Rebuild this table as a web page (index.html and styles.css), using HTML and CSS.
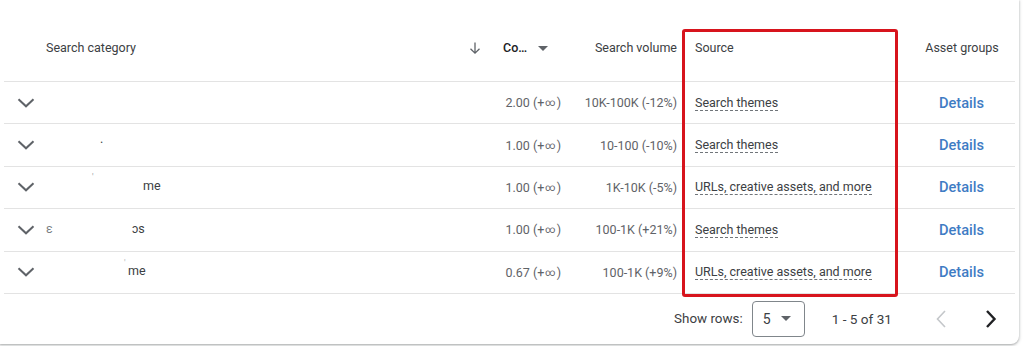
FILE: index.html
```html
<!DOCTYPE html>
<html>
<head>
<meta charset="utf-8">
<link rel="stylesheet" href="styles.css">
</head>
<body>
<div class="card">
  <div class="table">
    <div class="row head">
      <div class="cell"></div>
      <div class="cell cat">Search category</div>
      <div class="cell arrow">
        <svg width="14" height="14" viewBox="0 0 14 14"><path d="M7 1.5v10.5M2.5 7.8L7 12.2l4.5-4.4" fill="none" stroke="#5f6368" stroke-width="1.3"/></svg>
      </div>
      <div class="cell co"><span class="co-label">Co…</span><svg class="drop" width="10" height="5" viewBox="0 0 10 5"><path d="M0 0h10L5 5z" fill="#5f6368"/></svg></div>
      <div class="cell vol">Search volume</div>
      <div class="cell src">Source</div>
      <div class="cell ag">Asset groups</div>
    </div>

    <div class="row r1">
      <div class="cell exp"><svg width="18" height="10" viewBox="0 0 18 10"><path d="M1.5 1.2L9 8.3l7.5-7.1" fill="none" stroke="#5f6368" stroke-width="2"/></svg></div>
      <div class="cell cat"></div>
      <div class="cell"></div>
      <div class="cell num">2.00 (+<span class="inf">∞</span>)</div>
      <div class="cell vol num">10K-100K (-12%)</div>
      <div class="cell src"><span class="dotted">Search themes</span></div>
      <div class="cell ag"><span class="link">Details</span></div>
    </div>

    <div class="row r2">
      <div class="cell exp"><svg width="18" height="10" viewBox="0 0 18 10"><path d="M1.5 1.2L9 8.3l7.5-7.1" fill="none" stroke="#5f6368" stroke-width="2"/></svg></div>
      <div class="cell cat"><span class="frag f2">.</span></div>
      <div class="cell"></div>
      <div class="cell num">1.00 (+<span class="inf">∞</span>)</div>
      <div class="cell vol num">10-100 (-10%)</div>
      <div class="cell src"><span class="dotted">Search themes</span></div>
      <div class="cell ag"><span class="link">Details</span></div>
    </div>

    <div class="row r3">
      <div class="cell exp"><svg width="18" height="10" viewBox="0 0 18 10"><path d="M1.5 1.2L9 8.3l7.5-7.1" fill="none" stroke="#5f6368" stroke-width="2"/></svg></div>
      <div class="cell cat"><span class="frag f3a">'</span><span class="frag f3b">me</span></div>
      <div class="cell"></div>
      <div class="cell num">1.00 (+<span class="inf">∞</span>)</div>
      <div class="cell vol num">1K-10K (-5%)</div>
      <div class="cell src"><span class="dotted">URLs, creative assets, and more</span></div>
      <div class="cell ag"><span class="link">Details</span></div>
    </div>

    <div class="row r4">
      <div class="cell exp"><svg width="18" height="10" viewBox="0 0 18 10"><path d="M1.5 1.2L9 8.3l7.5-7.1" fill="none" stroke="#5f6368" stroke-width="2"/></svg></div>
      <div class="cell cat"><span class="frag f4a">ε</span><span class="frag f4b">ɔs</span></div>
      <div class="cell"></div>
      <div class="cell num">1.00 (+<span class="inf">∞</span>)</div>
      <div class="cell vol num">100-1K (+21%)</div>
      <div class="cell src"><span class="dotted">Search themes</span></div>
      <div class="cell ag"><span class="link">Details</span></div>
    </div>

    <div class="row r5">
      <div class="cell exp"><svg width="18" height="10" viewBox="0 0 18 10"><path d="M1.5 1.2L9 8.3l7.5-7.1" fill="none" stroke="#5f6368" stroke-width="2"/></svg></div>
      <div class="cell cat"><span class="frag f5a">'</span><span class="frag f5b">me</span></div>
      <div class="cell"></div>
      <div class="cell num">0.67 (+<span class="inf">∞</span>)</div>
      <div class="cell vol num">100-1K (+9%)</div>
      <div class="cell src"><span class="dotted">URLs, creative assets, and more</span></div>
      <div class="cell ag"><span class="link">Details</span></div>
    </div>
  </div>

  <div class="footer">
    <span class="show">Show rows:</span>
    <div class="select"><span>5</span><svg width="10" height="5" viewBox="0 0 10 5"><path d="M0 0h10L5 5z" fill="#5f6368"/></svg></div>
    <span class="range">1 - 5 of 31</span>
    <div class="pbtn"><svg width="12" height="20" viewBox="0 0 12 20"><path d="M10 2L2.5 10 10 18" fill="none" stroke="#c4c7ca" stroke-width="1.6"/></svg></div>
    <div class="pbtn"><svg width="12" height="20" viewBox="0 0 12 20"><path d="M2 2l7.5 8L2 18" fill="none" stroke="#202124" stroke-width="2.4"/></svg></div>
  </div>

  <div class="highlight"></div>
</div>
</body>
</html>
```

FILE: styles.css
```css
* { box-sizing: border-box; }

html, body {
  margin: 0;
  padding: 0;
  background: #ffffff;
}

body {
  font-family: Roboto, "Liberation Sans", Arial, sans-serif;
  font-size: 12.5px;
  color: #3c4043;
  width: 1024px;
  height: 346px;
  overflow: hidden;
}

.card {
  position: relative;
  width: 1019px;
  height: 344px;
  background: #ffffff;
  border-radius: 0 0 8px 0;
  box-shadow: 0 1px 2px rgba(60, 64, 67, 0.3), 0 1px 3px 1px rgba(60, 64, 67, 0.15);
  padding: 0 4px 0 4px;
}

.table {
  width: 1011px;
}

.row {
  display: grid;
  grid-template-columns: 42px 414px 30px 75px 116px 227px 107px;
  border-bottom: 1px solid #e3e3e3;
  height: 42.4px;
  align-items: center;
}

.row.head {
  height: 82px;
  padding-top: 14px;
}

.cell {
  white-space: nowrap;
  display: flex;
  align-items: center;
}

.exp {
  padding-left: 13px;
}

.exp svg { display: block; }

.cat {
  color: #3c4043;
  position: relative;
  height: 20px;
}

.arrow {
  justify-content: center;
}

.arrow svg { display: block; }

.co {
  padding-left: 13px;
}

.co-label {
  font-weight: 500;
  color: #202124;
}

.drop {
  margin-left: 11px;
  margin-top: 1px;
}

.vol {
  justify-content: flex-end;
  padding-right: 4px;
}

.num {
  justify-content: flex-end;
  padding-right: 4px;
  color: #5f6368;
}

.inf {
  font-size: 10px;
  margin: 0 1px;
}

.src {
  padding-left: 14px;
}

.ag {
  justify-content: center;
}

.head .ag {
  padding-left: 1px;
}

.dotted {
  color: #3c4043;
  border-bottom: 1px dashed #70757a;
  line-height: 15px;
}

.link {
  color: #3f7cc4;
  font-weight: 500;
  font-size: 14.6px;
}

.frag {
  position: absolute;
  top: 1px;
  color: #3c4043;
}

.f2 { left: 54px; top: -4px; }
.f3a { left: 46px; top: -5px; color: #9aa0a6; font-size: 9px; }
.f3b { left: 97px; }
.f4a { left: 0px; color: #7a7f84; }
.f4b { left: 86px; }
.f5a { left: 78px; top: -4px; color: #b0b4b8; font-size: 9px; }
.f5b { left: 82px; }

.footer {
  display: flex;
  align-items: center;
  justify-content: flex-end;
  height: 50px;
  padding-right: 4px;
}

.show {
  color: #3c4043;
  font-size: 13.4px;
  margin-right: 9px;
}

.select {
  width: 53px;
  height: 36px;
  border: 1px solid #80868b;
  border-radius: 4px;
  display: flex;
  align-items: center;
  padding-left: 10px;
  font-size: 14px;
  color: #3c4043;
}

.select svg {
  margin-left: 10px;
}

.range {
  margin-left: 27px;
  font-size: 13.6px;
  color: #3c4043;
  margin-right: 29px;
}

.pbtn {
  width: 40px;
  height: 40px;
  display: flex;
  align-items: center;
  justify-content: center;
}

.pbtn + .pbtn {
  margin-left: 10px;
}

.highlight {
  position: absolute;
  left: 682px;
  top: 29px;
  width: 216px;
  height: 268px;
  border: 3px solid #d7141d;
  border-radius: 3px;
  pointer-events: none;
}
```
